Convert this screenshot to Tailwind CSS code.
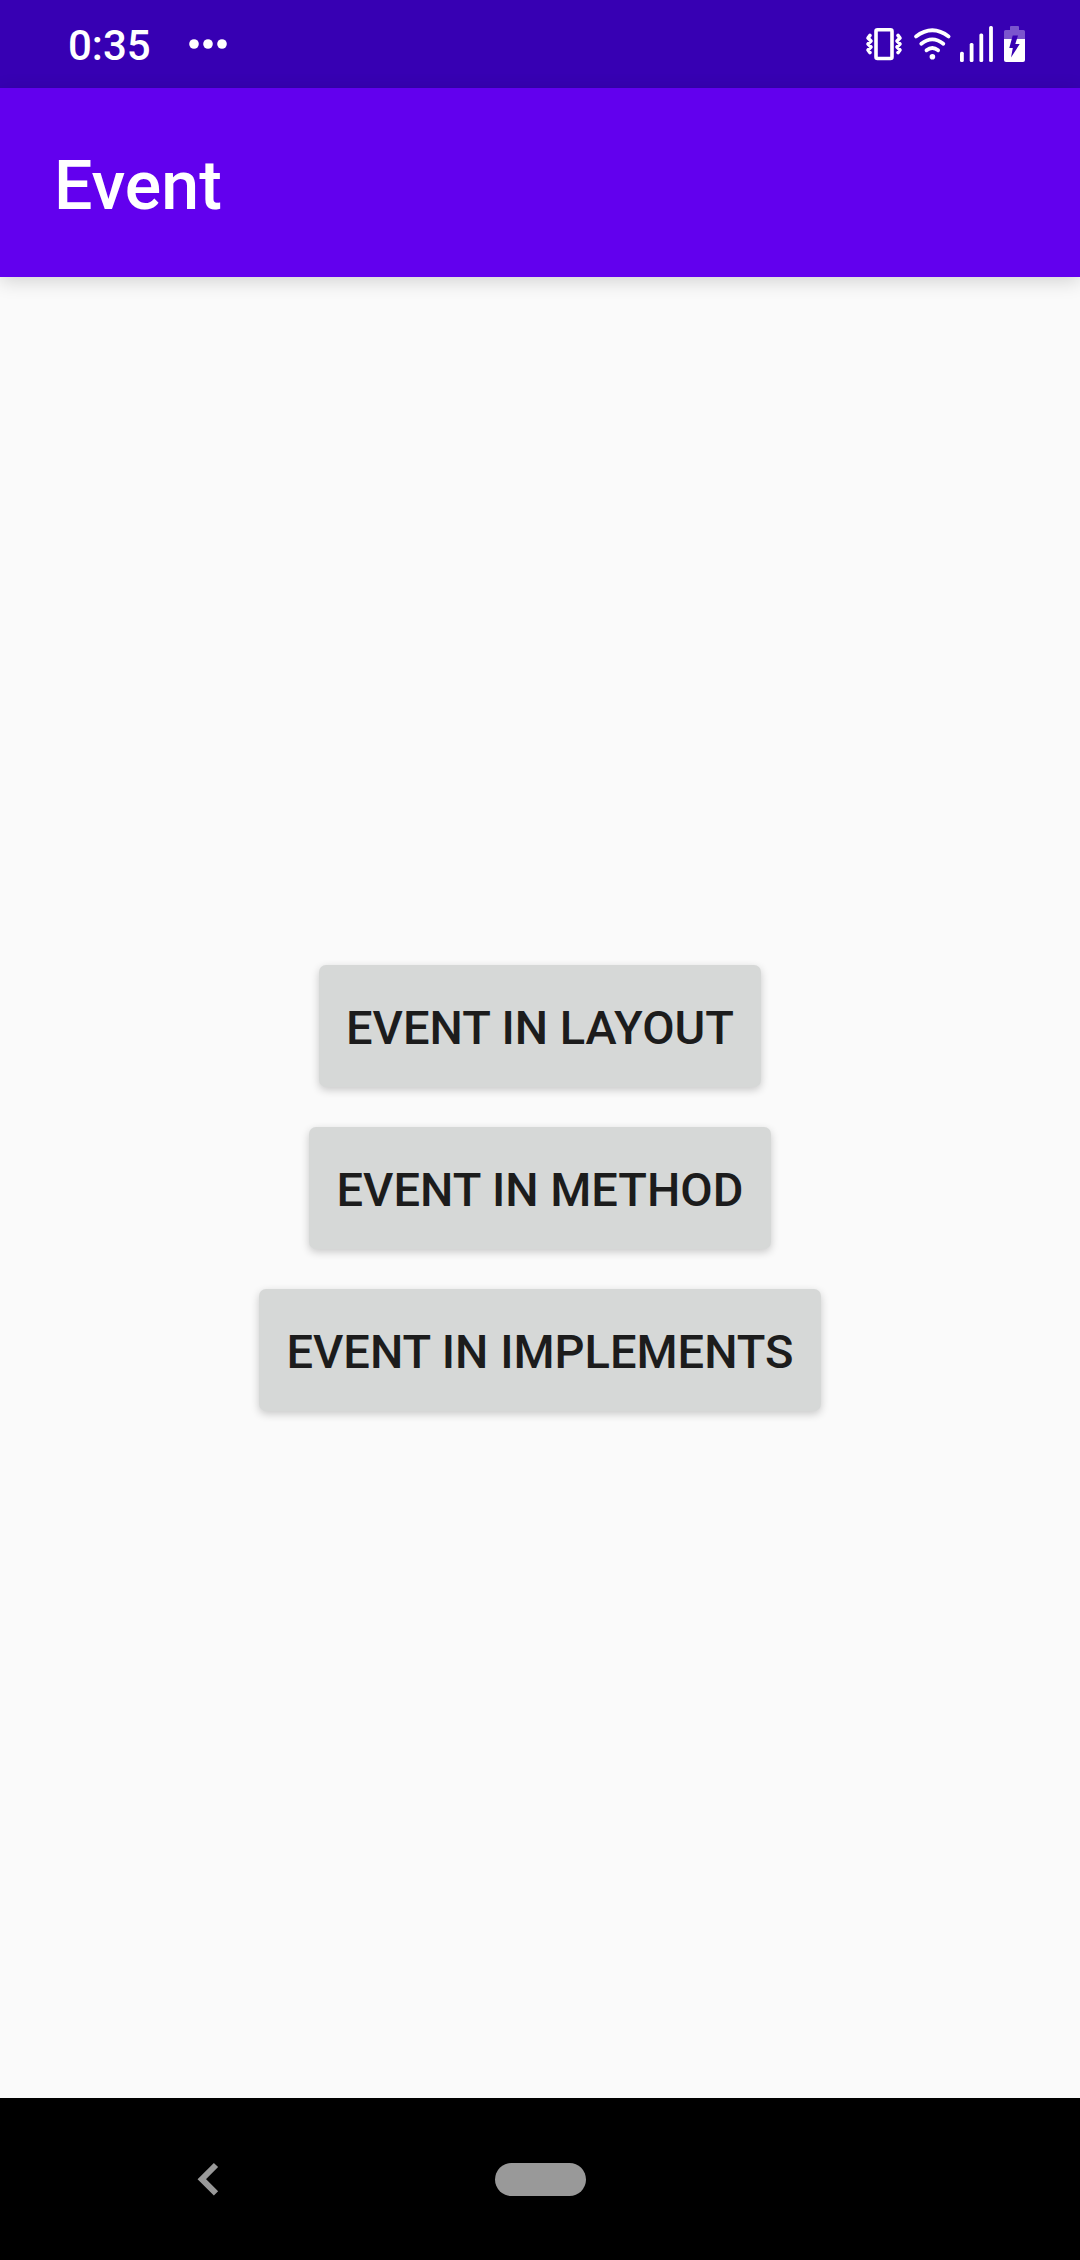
<!DOCTYPE html>
<html lang="en">
<head>
<meta charset="utf-8">
<title>Event</title>
<script src="https://cdn.jsdelivr.net/npm/@tailwindcss/browser@4"></script>
</head>
<body class="flex h-[2260px] w-[1080px] flex-col overflow-hidden bg-[#fafafa] font-['Roboto',sans-serif] font-medium">
  <div class="flex h-[88px] shrink-0 items-center justify-between bg-[#3700b3] text-white">
    <div class="flex items-center pl-[68px]">
      <span class="w-[121px] pt-[3px] text-[42px] leading-[49px]">0:35</span>
      <svg class="h-[10px] w-[38px]" viewBox="0 0 38 10" fill="currentColor"><circle cx="5" cy="5" r="4.8"/><circle cx="19" cy="5" r="4.8"/><circle cx="33" cy="5" r="4.8"/></svg>
    </div>
    <svg class="h-[88px] w-[220px]" viewBox="860 0 220 88" fill="none">
      <g stroke="#fff" stroke-linecap="round" stroke-linejoin="round">
        <rect x="876" y="29.700" width="16" height="28.800" rx="1.5" stroke-width="3.600"/>
        <path stroke-width="3.600" d="M870 35.400L868 38L871 41L868 44L871 47L868 50L870 52.600M898 35.400L900 38L897 41L900 44L897 47L900 50L898 52.600"/>
      </g>
      <g stroke="#fff" stroke-width="3.8" stroke-linecap="round">
        <path d="M916 36.400Q932.300 24.200 948.600 36.400"/>
        <path d="M921.300 43.700Q932.300 35 943.300 43.700"/>
        <path d="M926.500 50.300Q932.300 45.800 938.100 50.300"/>
      </g>
      <circle cx="932.4" cy="56.7" r="2.800" fill="#fff"/>
      <g fill="#fff">
        <rect x="960" y="51.700" width="3.800" height="10.300" rx="1.500"/>
        <rect x="969.700" y="43" width="3.800" height="19" rx="1.500"/>
        <rect x="979.400" y="33.500" width="3.800" height="28.500" rx="1.500"/>
        <rect x="989.100" y="26" width="3.800" height="36" rx="1.500"/>
      </g>
      <path fill="#7b55cd" d="M1010 27Q1010 26 1011 26H1018Q1019 26 1019 27V30H1023.500Q1025 30 1025 31.500V39H1004V31.500Q1004 30 1005.500 30H1010Z"/>
      <path fill="#fff" d="M1004 39H1025V60Q1025 62 1023 62H1006Q1004 62 1004 60Z"/>
      <path fill="#3700b3" d="M1012.700 35.400H1018L1015.300 44H1019.700L1011 57.500L1012.800 48H1009.300Z"/>
    </svg>
  </div>
  <header class="relative flex h-[189px] shrink-0 items-center bg-[#6200ee] pl-[54px] pt-[6px] text-white shadow-[0_4px_18px_rgba(0,0,0,0.16)]">
    <h1 class="text-[68px] leading-[80px]">Event</h1>
  </header>
  <main class="flex flex-1 flex-col items-center justify-center gap-[40px] pt-[1px] text-[47px] text-[#1c1c1c]">
    <button class="flex h-[122px] w-[442px] items-center justify-center whitespace-nowrap rounded-[7px] bg-[#d6d8d7] pt-[4px] shadow-[0_3px_8px_rgba(0,0,0,0.2)]">EVENT IN LAYOUT</button>
    <button class="flex h-[122px] w-[462px] items-center justify-center whitespace-nowrap rounded-[7px] bg-[#d6d8d7] pt-[4px] shadow-[0_3px_8px_rgba(0,0,0,0.2)]">EVENT IN METHOD</button>
    <button class="flex h-[122px] w-[562px] items-center justify-center whitespace-nowrap rounded-[7px] bg-[#d6d8d7] pt-[4px] shadow-[0_3px_8px_rgba(0,0,0,0.2)]">EVENT IN IMPLEMENTS</button>
  </main>
  <nav class="flex h-[162px] shrink-0 items-center bg-black pl-[197px]">
    <svg class="h-[34px] w-[22px]" viewBox="0 0 22 34" fill="none" stroke="#999" stroke-width="6"><path d="M19 3L4.800 17.200L19 31.400"/></svg>
    <div class="ml-[276px] h-[33px] w-[91px] rounded-full bg-[#999]"></div>
  </nav>
</body>
</html>
